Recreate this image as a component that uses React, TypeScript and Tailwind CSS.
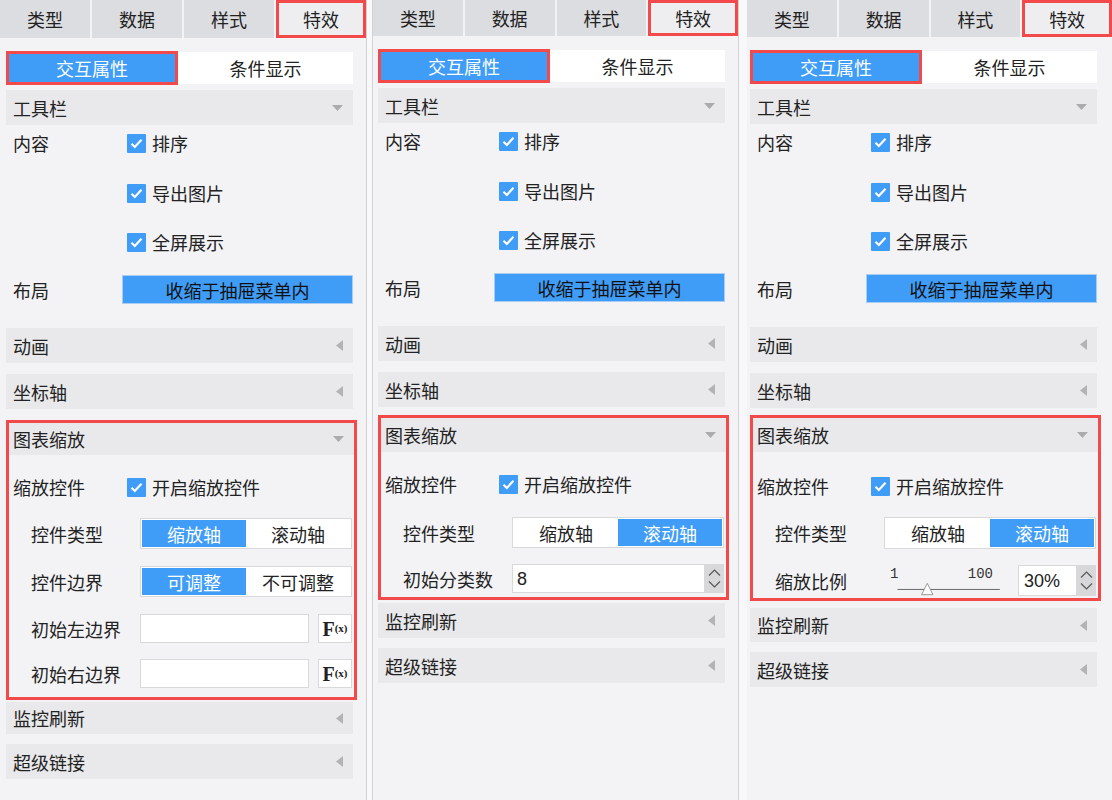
import React from "react";

type PanelVariant = "boundary" | "count" | "ratio";

const Check = () => (
  <span className="flex h-[19px] w-[19px] shrink-0 items-center justify-center rounded-[1px] bg-[#3f9cf7]">
    <svg width="13" height="11" viewBox="0 0 13 11">
      <path d="M1.5 5.8 L4.8 9 L11.5 1.8" fill="none" stroke="white" strokeWidth="2.2" />
    </svg>
  </span>
);

const Header = ({
  title,
  open,
  className = "",
  pl = "pl-[7px]",
}: {
  title: string;
  open?: boolean;
  className?: string;
  pl?: string;
}) => (
  <div className={`flex items-center justify-between bg-[#e9e9eb] pr-[10px] ${pl} ${className}`}>
    <span className="leading-none">{title}</span>
    {open ? (
      <svg width="11" height="6" viewBox="0 0 11 6">
        <path d="M0 0H11L5.5 6Z" fill="#ababad" />
      </svg>
    ) : (
      <svg width="7" height="11" viewBox="0 0 7 11">
        <path d="M7 0V11L0 5.5Z" fill="#b3b3b5" />
      </svg>
    )}
  </div>
);

const TabBar = ({ h }: { h: string }) => (
  <div className={`grid grid-cols-4 gap-[2px] ${h}`}>
    {["类型", "数据", "样式"].map((t) => (
      <div key={t} className="flex items-center justify-center bg-[#dcdde0] leading-none">
        {t}
      </div>
    ))}
    <div className="flex items-center justify-center border-[3px] border-[#f24a4a] bg-[#eeeef1] leading-none">
      特效
    </div>
  </div>
);

const CheckItem = ({ text }: { text: string }) => (
  <div className="flex items-center gap-[6px]">
    <Check />
    <span className="leading-none">{text}</span>
  </div>
);

const Segmented = ({ items, active }: { items: string[]; active: number }) => (
  <div className="flex h-full w-[212px] border border-[#d9d9db] bg-white p-[1px]">
    {items.map((t, i) => (
      <div
        key={t}
        className={`flex flex-1 items-center justify-center leading-none ${
          i === active ? "bg-[#3f9cf7] text-white" : "bg-white text-[#222]"
        }`}
      >
        {t}
      </div>
    ))}
  </div>
);

const Spinner = () => (
  <div className="flex h-full w-[19px] flex-col items-center justify-center gap-[5px] bg-[#d8d8da]">
    <svg width="13" height="7" viewBox="0 0 13 7">
      <path d="M1 6.5 L6.5 1 L12 6.5" fill="none" stroke="#555" strokeWidth="1.1" />
    </svg>
    <svg width="13" height="7" viewBox="0 0 13 7">
      <path d="M1 0.5 L6.5 6 L12 0.5" fill="none" stroke="#555" strokeWidth="1.1" />
    </svg>
  </div>
);

const FxButton = () => (
  <div className="flex h-full w-[34px] items-center justify-center border border-[#d9d9db] bg-white font-['Liberation_Serif',serif] font-bold text-[#222]">
    <span className="text-[20px] leading-none">F</span>
    <span className="text-[11px] leading-none">(x)</span>
  </div>
);

const SubRow = ({ label, className = "", children }: { label: string; className?: string; children: React.ReactNode }) => (
  <div className={`flex items-center ${className}`}>
    <span className="w-[131px] shrink-0 pl-[22px] leading-none">{label}</span>
    {children}
  </div>
);

const ZoomSection = ({ variant }: { variant: PanelVariant }) => {
  const headerH = variant === "boundary" ? "h-[32px]" : "h-[34px]";
  const firstMt = variant === "ratio" ? "mt-[19px]" : "mt-[17px]";
  return (
    <div className="w-[351px] border-[3px] border-[#f24a4a]">
      <Header title="图表缩放" open pl="pl-[4px]" className={headerH} />
      <div className={`flex h-[30px] items-center ${firstMt}`}>
        <span className="w-[118px] shrink-0 pl-[4px] leading-none">缩放控件</span>
        <CheckItem text="开启缩放控件" />
      </div>
      {variant === "boundary" && (
        <div className="pb-[9px]">
          <SubRow label="控件类型" className="mt-[16px] h-[31px]">
            <Segmented items={["缩放轴", "滚动轴"]} active={0} />
          </SubRow>
          <SubRow label="控件边界" className="mt-[17px] h-[31px]">
            <Segmented items={["可调整", "不可调整"]} active={0} />
          </SubRow>
          <SubRow label="初始左边界" className="mt-[17px] h-[29px]">
            <div className="h-full w-[169px] border border-[#d9d9db] bg-white" />
            <div className="ml-[9px] h-full">
              <FxButton />
            </div>
          </SubRow>
          <SubRow label="初始右边界" className="mt-[16px] h-[29px]">
            <div className="h-full w-[169px] border border-[#d9d9db] bg-white" />
            <div className="ml-[9px] h-full">
              <FxButton />
            </div>
          </SubRow>
        </div>
      )}
      {variant === "count" && (
        <div className="pb-[4px]">
          <SubRow label="控件类型" className="mt-[18px] h-[31px]">
            <Segmented items={["缩放轴", "滚动轴"]} active={1} />
          </SubRow>
          <SubRow label="初始分类数" className="mt-[16px] h-[29px]">
            <div className="flex h-full w-[193px] items-center border border-[#d9d9db] bg-white pl-[4px] font-['Liberation_Sans',sans-serif] leading-none">
              8
            </div>
            <Spinner />
          </SubRow>
        </div>
      )}
      {variant === "ratio" && (
        <div className="pb-[2px]">
          <SubRow label="控件类型" className="mt-[16px] h-[32px]">
            <Segmented items={["缩放轴", "滚动轴"]} active={1} />
          </SubRow>
          <SubRow label="缩放比例" className="mt-[16px] h-[31px]">
            <div className="flex h-full w-[134px] flex-col pl-[6px]">
              <div className="flex w-[103px] justify-between pt-[2px] font-['Liberation_Mono',monospace] text-[14px] leading-none text-[#333]">
                <span>1</span>
                <span>100</span>
              </div>
              <svg width="120" height="16" viewBox="0 0 120 16" className="mt-[1px]">
                <line x1="0" y1="8.5" x2="117" y2="8.5" stroke="#555" strokeWidth="1" />
                <path d="M34 1.5 L40.5 14.5 L27.5 14.5 Z" fill="white" stroke="#8a8a8a" strokeWidth="1" />
              </svg>
            </div>
            <div className="flex h-full w-[59px] items-center border border-[#d9d9db] bg-white pl-[5px] font-['Liberation_Sans',sans-serif] leading-none">
              30%
            </div>
            <Spinner />
          </SubRow>
        </div>
      )}
    </div>
  );
};

const Panel = ({
  tabH,
  variant,
  pl,
  boxMt,
  afterMt,
  monitorH,
  className = "",
}: {
  tabH: string;
  variant: PanelVariant;
  pl: string;
  boxMt: string;
  afterMt: string;
  monitorH: string;
  className?: string;
}) => (
  <div className={`flex h-full flex-col bg-[#f3f3f6] ${className}`}>
    <TabBar h={tabH} />
    <div className={pl}>
      <div className="flex w-[347px] flex-col">
        <div className="mt-[13px] flex items-center">
          <div className="flex h-[34px] w-[172px] items-center justify-center border-[3px] border-[#f24a4a] bg-[#3f9cf7] leading-none text-white">
            交互属性
          </div>
          <div className="flex h-[32px] flex-1 items-center justify-center bg-white leading-none">条件显示</div>
        </div>
        <Header title="工具栏" open className="mt-[5px] h-[35px]" />
        <div className="mt-[3px] flex h-[30px] items-center">
          <span className="w-[121px] shrink-0 pl-[7px] leading-none">内容</span>
          <CheckItem text="排序" />
        </div>
        <div className="mt-[20px] flex h-[30px] items-center pl-[121px]">
          <CheckItem text="导出图片" />
        </div>
        <div className="mt-[19px] flex h-[30px] items-center pl-[121px]">
          <CheckItem text="全屏展示" />
        </div>
        <div className="mt-[18px] flex h-[29px] items-center">
          <span className="w-[116px] shrink-0 pl-[7px] leading-none">布局</span>
          <div className="flex h-full flex-1 items-center justify-center border border-[#a9cdf2] bg-[#3f9cf7] leading-none text-[#111]">
            收缩于抽屉菜单内
          </div>
        </div>
        <Header title="动画" className="mt-[24px] h-[35px]" />
        <Header title="坐标轴" className="mt-[11px] h-[35px]" />
        <div className={boxMt}>
          <ZoomSection variant={variant} />
        </div>
        <Header title="监控刷新" className={`${afterMt} ${monitorH}`} />
        <Header title="超级链接" className="mt-[10px] h-[35px]" />
      </div>
    </div>
  </div>
);

export default function App() {
  return (
    <div className="flex h-[800px] w-[1112px] overflow-hidden bg-[#f8f8fa] font-['Noto_Sans_CJK_SC','Noto_Sans',sans-serif] text-[18px] text-[#222]">
      <Panel
        tabH="h-[38px]"
        variant="boundary"
        pl="pl-[6px]"
        boxMt="mt-[11px]"
        afterMt="mt-[2px]"
        monitorH="h-[32px]"
        className="w-[367px] border-r border-[#d2d2d5]"
      />
      <Panel
        tabH="h-[36px]"
        variant="count"
        pl="pl-[5px]"
        boxMt="mt-[8px]"
        afterMt="mt-[3px]"
        monitorH="h-[35px]"
        className="ml-[5px] w-[367px] border-x border-[#d2d2d5]"
      />
      <Panel
        tabH="h-[37px]"
        variant="ratio"
        pl="pl-[3px]"
        boxMt="mt-[7px]"
        afterMt="mt-[7px]"
        monitorH="h-[34px]"
        className="ml-[8px] w-[365px]"
      />
    </div>
  );
}
